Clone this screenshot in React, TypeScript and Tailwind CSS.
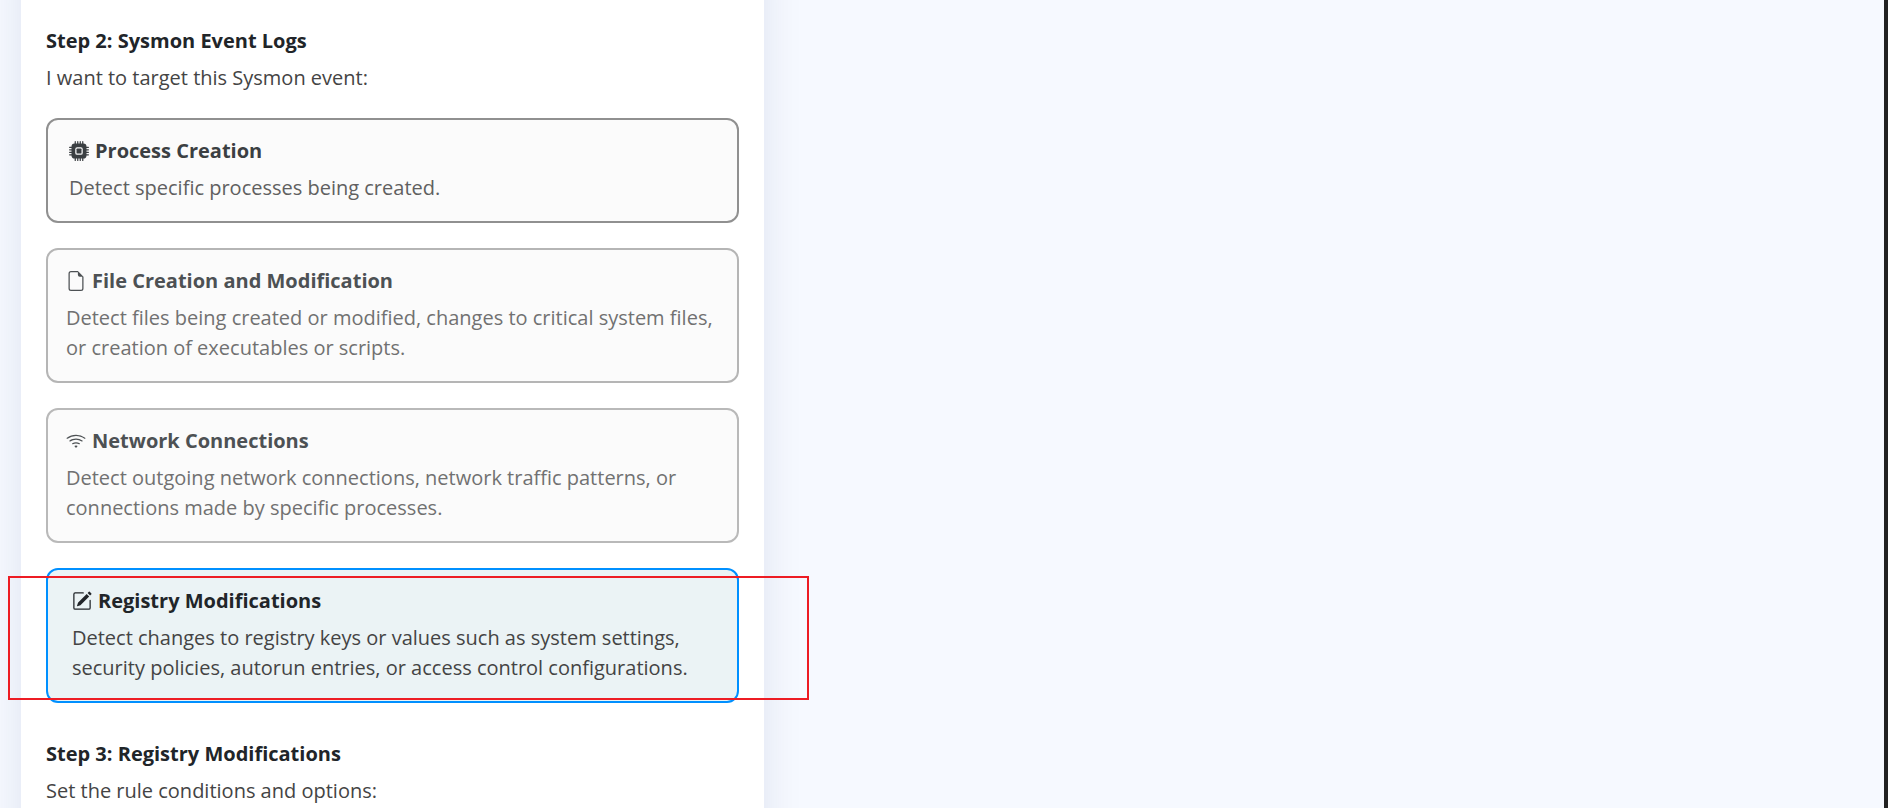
import React, { useState } from 'react';
import { clsx } from 'clsx';
import type { IconType } from 'react-icons';
import { BsCpuFill, BsFileEarmark, BsPencilSquare, BsWifi } from 'react-icons/bs';

interface SysmonEvent {
  id: string;
  title: string;
  description: string;
  icon: IconType;
  card: string;
  heading: string;
  text: string;
}

const events: SysmonEvent[] = [
  {
    id: 'process',
    title: 'Process Creation',
    description: 'Detect specific processes being created.',
    icon: BsCpuFill,
    card: 'border-[#909090] bg-[#fbfbfb] pl-[21px] pr-4',
    heading: 'text-[#3b3f42]',
    text: 'text-[#606060]',
  },
  {
    id: 'file',
    title: 'File Creation and Modification',
    description:
      'Detect files being created or modified, changes to critical system files, or creation of executables or scripts.',
    icon: BsFileEarmark,
    card: 'border-[#b5b5b5] bg-[#fbfbfb] pl-[18px] pr-4',
    heading: 'text-[#4d5154]',
    text: 'text-[#717171]',
  },
  {
    id: 'network',
    title: 'Network Connections',
    description:
      'Detect outgoing network connections, network traffic patterns, or connections made by specific processes.',
    icon: BsWifi,
    card: 'border-[#b9b9b9] bg-[#fbfbfb] pl-[18px] pr-4',
    heading: 'text-[#4d5154]',
    text: 'text-[#717171]',
  },
  {
    id: 'registry',
    title: 'Registry Modifications',
    description:
      'Detect changes to registry keys or values such as system settings, security policies, autorun entries, or access control configurations.',
    icon: BsPencilSquare,
    card: 'border-[#0090ff] bg-[#ebf3f5] pl-6 pr-4',
    heading: 'text-[#212529]',
    text: 'text-[#444444]',
  },
];

interface EventCardProps {
  event: SysmonEvent;
  selected: boolean;
  onSelect: () => void;
}

const EventCard: React.FC<EventCardProps> = ({ event, selected, onSelect }) => {
  const Icon = event.icon;

  return (
    <button
      type="button"
      aria-pressed={selected}
      onClick={onSelect}
      className={clsx('block w-full rounded-xl border-2 pt-4 pb-[18px] text-left', event.card)}
    >
      <span className={clsx('mb-[7px] flex items-center gap-[6px] font-bold', event.heading)}>
        <Icon size={20} className="shrink-0" />
        {event.title}
      </span>
      <span className={clsx('block', event.text)}>{event.description}</span>
    </button>
  );
};

interface StepHeaderProps {
  title: string;
  subtitle: string;
}

const StepHeader: React.FC<StepHeaderProps> = ({ title, subtitle }) => (
  <header>
    <h2 className="mb-[7px] font-bold text-[#212529]">{title}</h2>
    <p className="text-[#444444]">{subtitle}</p>
  </header>
);

const App: React.FC = () => {
  const [selected, setSelected] = useState('registry');

  return (
    <div className="h-screen overflow-hidden border-r-4 border-[#222222] bg-[#f6f9ff] pl-[21px] font-['Open_Sans','Noto_Sans',sans-serif] text-[20px] leading-[30px]">
      <main className="-mt-10 min-h-full w-full max-w-[743px] bg-white px-[25px] pt-[66px] pb-12 shadow-[0_0_38px_rgba(1,41,112,0.1)]">
        <StepHeader title="Step 2: Sysmon Event Logs" subtitle="I want to target this Sysmon event:" />

        <div className="relative mt-[25px] flex flex-col gap-[25px]">
          {events.map((event) => (
            <EventCard
              key={event.id}
              event={event}
              selected={selected === event.id}
              onSelect={() => setSelected(event.id)}
            />
          ))}
          {/* Highlight frame over the registry card */}
          <div className="pointer-events-none absolute -left-[38px] -right-[70px] bottom-[3px] h-[124px] border-2 border-[#ed1c24]" />
        </div>

        <div className="mt-9">
          <StepHeader title="Step 3: Registry Modifications" subtitle="Set the rule conditions and options:" />
        </div>
      </main>
    </div>
  );
};

export default App;
